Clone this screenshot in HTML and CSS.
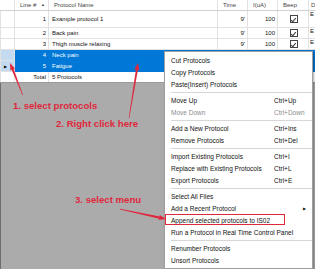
FILE: index.html
```html
<!DOCTYPE html>
<html lang="en">

<head>
    <meta charset="UTF-8">
    <meta name="viewport" content="width=device-width, initial-scale=1.0">
    <title>Protocol List</title>
    <link rel="stylesheet" href="styles.css">
</head>

<body>
    <div class="grid">
        <table class="protocols">
            <colgroup>
                <col class="col-head">
                <col class="col-line">
                <col class="col-name">
                <col class="col-time">
                <col class="col-current">
                <col class="col-beep">
                <col class="col-desc">
            </colgroup>
            <thead>
                <tr>
                    <th class="row-head"></th>
                    <th>Line # <span class="sort">&#9650;</span></th>
                    <th>Protocol Name</th>
                    <th>Time</th>
                    <th>I(uA)</th>
                    <th>Beep</th>
                    <th class="desc">D</th>
                </tr>
            </thead>
            <tbody>
                <tr class="tall">
                    <td class="row-head"></td>
                    <td class="num">1</td>
                    <td>Example protocol 1</td>
                    <td class="num">9'</td>
                    <td class="num">100</td>
                    <td class="check"><span class="box"></span></td>
                    <td class="desc">E</td>
                </tr>
                <tr>
                    <td class="row-head"></td>
                    <td class="num">2</td>
                    <td>Back pain</td>
                    <td class="num">9'</td>
                    <td class="num">100</td>
                    <td class="check"><span class="box"></span></td>
                    <td class="desc">E</td>
                </tr>
                <tr>
                    <td class="row-head"></td>
                    <td class="num">3</td>
                    <td>Thigh muscle relaxing</td>
                    <td class="num">9'</td>
                    <td class="num">100</td>
                    <td class="check"><span class="box"></span></td>
                    <td class="desc">E</td>
                </tr>
                <tr class="selected">
                    <td class="row-head"></td>
                    <td class="num">4</td>
                    <td>Neck pain</td>
                    <td class="num">9'</td>
                    <td class="num">100</td>
                    <td class="check"></td>
                    <td class="desc"></td>
                </tr>
                <tr class="selected">
                    <td class="row-head"><span class="current">&#9654;</span></td>
                    <td class="num">5</td>
                    <td>Fatigue</td>
                    <td class="num">9'</td>
                    <td class="num">100</td>
                    <td class="check"></td>
                    <td class="desc"></td>
                </tr>
                <tr class="total">
                    <td class="row-head"></td>
                    <td class="num">Total</td>
                    <td>5 Protocols</td>
                    <td></td>
                    <td></td>
                    <td></td>
                    <td></td>
                </tr>
            </tbody>
        </table>
    </div>

    <div class="workspace"></div>

    <!-- notes drawn over the screenshot -->
    <span class="note note-1">1. select protocols</span>
    <span class="note note-2">2. Right click here</span>
    <span class="note note-3">3. select menu</span>

    <ul class="context-menu">
        <li><span>Cut Protocols</span></li>
        <li><span>Copy Protocols</span></li>
        <li><span>Paste(Insert) Protocols</span></li>
        <li class="separator"></li>
        <li><span>Move Up</span><span class="key">Ctrl+Up</span></li>
        <li class="disabled"><span>Move Down</span><span class="key">Ctrl+Down</span></li>
        <li class="separator"></li>
        <li><span>Add a New Protocol</span><span class="key">Ctrl+Ins</span></li>
        <li><span>Remove Protocols</span><span class="key">Ctrl+Del</span></li>
        <li class="separator"></li>
        <li><span>Import Existing Protocols</span><span class="key">Ctrl+I</span></li>
        <li><span>Replace with Existing Protocols</span><span class="key">Ctrl+L</span></li>
        <li><span>Export Protocols</span><span class="key">Ctrl+E</span></li>
        <li class="separator"></li>
        <li><span>Select All Files</span></li>
        <li class="submenu"><span>Add a Recent Protocol</span><span class="arrow">&#9654;</span></li>
        <li><span>Append selected protocols to IS02</span></li>
        <li><span>Run a Protocol in Real Time Control Panel</span></li>
        <li class="separator"></li>
        <li><span>Renumber Protocols</span></li>
        <li><span>Unsort Protocols</span></li>
    </ul>

    <svg class="marks" width="315" height="269" viewBox="0 0 315 269">
        <rect x="165.5" y="214.5" width="119" height="10" fill="none" stroke="#e0283c" stroke-width="1" />
        <polygon points="23,95 22.4,95.2 11.6,69.6 13.6,68.8" fill="#e0283c" />
        <polygon points="10,63 15,68.5 10.4,70.5" fill="#e0283c" />
        <polygon points="129.3,118 128.7,118 135.9,69.7 137.9,70" fill="#e0283c" />
        <polygon points="138,63 139.3,70.3 134.4,69.5" fill="#e0283c" />
        <polygon points="120,208.8 119.9,209.4 159.4,218.7 159.9,216.5" fill="#e0283c" />
        <polygon points="166,219 158.7,219.9 159.7,215.1" fill="#e0283c" />
    </svg>
</body>

</html>
```

FILE: styles.css
```css
body {
    margin: 0;
    width: 315px;
    height: 269px;
    overflow: hidden;
    position: relative;
    display: flex;
    flex-direction: column;
    font-family: "Liberation Sans", Arial, sans-serif;
    background-color: #ababab;
}

.grid {
    height: 82px;
    flex: none;
    overflow: hidden;
    background-color: #fff;
    border-bottom: 1px solid #9a9a9a;
}

.protocols {
    border-collapse: collapse;
    table-layout: fixed;
    width: 330px;
    font-size: 6px;
    color: #111;
}

.col-head { width: 14px; }
.col-line { width: 34px; }
.col-name { width: 169px; }
.col-time { width: 30px; }
.col-current { width: 30px; }
.col-beep { width: 31px; }
.col-desc { width: 22px; }

.protocols th {
    height: 10px;
    padding: 0 0 0 5px;
    font-weight: normal;
    text-align: left;
    color: #444;
    border-right: 1px solid #e2e2e2;
    border-bottom: 1px solid #d0d0d0;
    white-space: nowrap;
}

.protocols td {
    height: 10px;
    padding: 0 2px 0 3px;
    border: 1px solid #e2e2e2;
    white-space: nowrap;
    overflow: hidden;
}

.protocols tr.tall td {
    height: 16px;
}

.protocols .num {
    text-align: right;
}

.protocols .desc {
    vertical-align: top;
    padding-left: 1px;
}

.protocols th.desc {
    vertical-align: middle;
    padding-left: 2px;
}

.sort {
    font-size: 4px;
    margin-left: 3px;
    vertical-align: 1px;
}

.row-head {
    background-color: #fff;
}

.check {
    text-align: center;
}

.box {
    display: inline-block;
    width: 6px;
    height: 6px;
    border: 1px solid #444;
    vertical-align: middle;
    position: relative;
}

.box::after {
    content: "";
    position: absolute;
    left: 1.5px;
    top: 0.5px;
    width: 2px;
    height: 3.5px;
    border-right: 1px solid #333;
    border-bottom: 1px solid #333;
    transform: rotate(40deg);
}

.protocols tr.selected td {
    background-color: #0078d7;
    color: #fff;
    border-color: #0078d7;
}

.protocols tr.selected td.row-head {
    background-color: #c4daf0;
    border-color: #e2e2e2;
    color: #000;
}

.current {
    font-size: 4px;
}

.workspace {
    flex: 1;
    border-left: 1px solid #6e6e6e;
}

.note {
    position: absolute;
    font-weight: bold;
    font-size: 9.6px;
    color: #e0283c;
    white-space: nowrap;
}

.note-1 {
    left: 13px;
    top: 100px;
}

.note-2 {
    left: 56px;
    top: 118px;
}

.note-3 {
    left: 75px;
    top: 194px;
}

.context-menu {
    position: absolute;
    left: 164px;
    top: 51px;
    width: 147px;
    margin: 0;
    padding: 2px 0;
    list-style: none;
    background-color: #fff;
    border: 1px solid #a0a0a0;
    box-shadow: 1px 1px 2px rgba(0, 0, 0, 0.35);
    font-size: 6.5px;
    color: #111;
}

.context-menu li {
    height: 12px;
    display: flex;
    align-items: center;
    padding: 0 6px 0 6px;
    white-space: nowrap;
}

.context-menu li .key {
    margin-left: auto;
    width: 32px;
}

.context-menu li.disabled {
    color: #8c8c8c;
}

.context-menu li .arrow {
    margin-left: auto;
    font-size: 4px;
}

.context-menu li.separator {
    height: 1px;
    margin: 2px 0 1px 6px;
    padding: 0;
    background-color: #d7d7d7;
}

.marks {
    position: absolute;
    left: 0;
    top: 0;
    pointer-events: none;
}
```
